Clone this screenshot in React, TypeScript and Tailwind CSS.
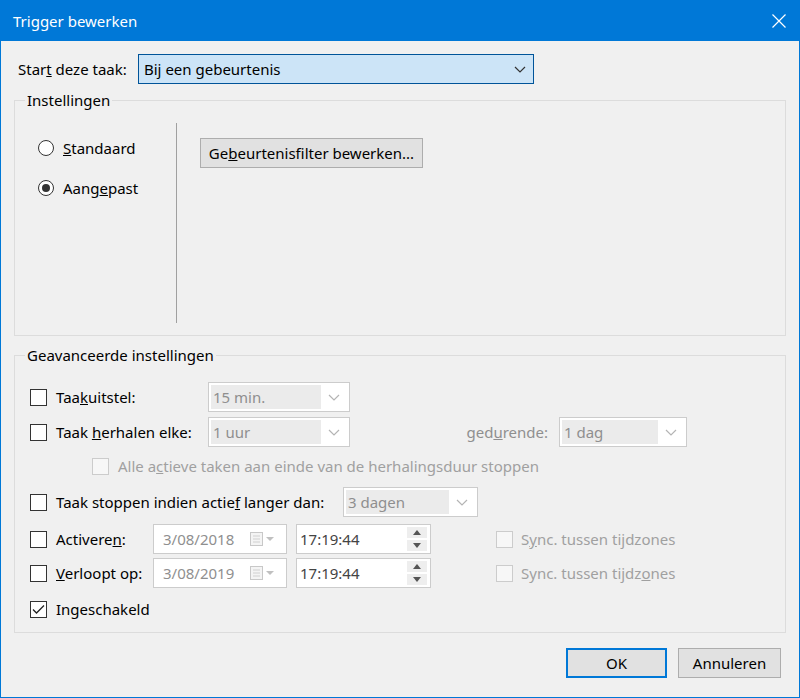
import React from "react";

function Chevron({ className }: { className?: string }) {
  return (
    <svg width="12" height="7" viewBox="0 0 12 7" className={className}>
      <polyline points="1,1 6,6 11,1" fill="none" stroke="currentColor" strokeWidth="1.2" />
    </svg>
  );
}

function Check({ checked, disabled }: { checked?: boolean; disabled?: boolean }) {
  return (
    <span
      className={
        disabled
          ? "w-[17px] h-[17px] shrink-0 border border-[#cccccc] bg-[#f7f7f7]"
          : "w-[17px] h-[17px] shrink-0 border border-[#333333] bg-white flex items-center justify-center"
      }
    >
      {checked && (
        <svg width="13" height="11" viewBox="0 0 13 11">
          <polyline points="1,5.5 4.5,9 12,1.5" fill="none" stroke="#222" strokeWidth="1.3" />
        </svg>
      )}
    </span>
  );
}

function Radio({ checked }: { checked?: boolean }) {
  return (
    <span className="w-[16px] h-[16px] shrink-0 rounded-full border border-[#333333] bg-white flex items-center justify-center">
      {checked && <span className="w-[8px] h-[8px] rounded-full bg-[#333333]" />}
    </span>
  );
}

function Combo({ value, className }: { value: string; className: string }) {
  return (
    <div className={`h-[30px] border border-[#cccccc] bg-white flex items-center p-[2px] ${className}`}>
      <div className="flex-1 h-full bg-[#ebebeb] pl-[2px] text-[#8f8f8f] flex items-center">{value}</div>
      <div className="w-[26px] flex items-center justify-center text-[#b4b4b4]">
        <Chevron />
      </div>
    </div>
  );
}

function DateBox({ value }: { value: string }) {
  return (
    <div className="w-[134px] h-[30px] border border-[#cccccc] bg-white flex items-center pl-[9px] text-[#8f8f8f]">
      <span className="flex-1">{value}</span>
      <svg width="30" height="14" viewBox="0 0 30 14" className="mr-[6px]">
        <rect x="0.5" y="0.5" width="12" height="13" fill="#f4f4f4" stroke="#c8c8c8" />
        <line x1="3" y1="4" x2="10" y2="4" stroke="#d0d0d0" />
        <line x1="3" y1="7" x2="10" y2="7" stroke="#d0d0d0" />
        <line x1="3" y1="10" x2="10" y2="10" stroke="#d0d0d0" />
        <polygon points="16,5 24,5 20,9" fill="#c0c0c0" />
      </svg>
    </div>
  );
}

function TimeBox({ value }: { value: string }) {
  return (
    <div className="w-[135px] h-[30px] border border-[#cccccc] bg-white flex items-center pl-[3px] pr-[3px] text-[#444444]">
      <span className="flex-1">{value}</span>
      <div className="w-[20px] flex flex-col gap-[2px]">
        <div className="h-[11px] bg-[#eeeeee] flex items-center justify-center">
          <svg width="8" height="5" viewBox="0 0 8 5">
            <polygon points="0,5 8,5 4,0" fill="#555" />
          </svg>
        </div>
        <div className="h-[11px] bg-[#eeeeee] flex items-center justify-center">
          <svg width="8" height="5" viewBox="0 0 8 5">
            <polygon points="0,0 8,0 4,5" fill="#555" />
          </svg>
        </div>
      </div>
    </div>
  );
}

export default function App() {
  return (
    <div className="w-[800px] h-[698px] bg-[#0078d7] flex flex-col font-['Noto_Sans',sans-serif] text-[15px] leading-[20px] text-black">
      <div className="h-[41px] shrink-0 flex items-center justify-between pl-[13px] pr-[14px] text-white">
        <span>Trigger bewerken</span>
        <svg width="14" height="14" viewBox="0 0 14 14">
          <path d="M0.5 0.5 L13.5 13.5 M13.5 0.5 L0.5 13.5" stroke="white" strokeWidth="1.2" />
        </svg>
      </div>

      <div className="flex-1 mx-[1px] mb-[1px] bg-[#f0f0f0] flex flex-col">
        <div className="flex items-center pt-[13px]">
          <span className="w-[137px] pl-[17px]">
            Star<u>t</u> deze taak:
          </span>
          <div className="w-[396px] h-[30px] border border-[#005499] bg-[#cce4f7] flex items-center pl-[5px] pr-[7px]">
            <span className="flex-1">Bij een gebeurtenis</span>
            <Chevron className="text-[#333333]" />
          </div>
        </div>

        <fieldset className="mx-[13px] mt-[6px] border border-[#dcdcdc]">
          <legend className="ml-[10px] px-[2px]">Instellingen</legend>
          <div className="flex pt-[13px] pb-[12px]">
            <div className="w-[161px] pl-[23px] pt-[15px] flex flex-col gap-[20px]">
              <div className="h-[20px] flex items-center gap-[9px]">
                <Radio />
                <span>
                  <u>S</u>tandaard
                </span>
              </div>
              <div className="h-[20px] flex items-center gap-[9px]">
                <Radio checked />
                <span>
                  Aang<u>e</u>past
                </span>
              </div>
            </div>
            <div className="w-px h-[200px] bg-[#a0a0a0]" />
            <div className="pl-[23px] pt-[15px]">
              <button className="w-[223px] h-[30px] border border-[#adadad] bg-[#e1e1e1]">
                Ge<u>b</u>eurtenisfilter bewerken...
              </button>
            </div>
          </div>
        </fieldset>

        <fieldset className="mx-[13px] mt-[9px] border border-[#dcdcdc]">
          <legend className="ml-[10px] px-[2px]">Geavanceerde instellingen</legend>
          <div className="flex flex-col pt-[17px] pb-[13px]">
            <div className="h-[30px] flex items-center">
              <div className="w-[193px] pl-[15px] flex items-center gap-[9px]">
                <Check />
                <span>
                  Taa<u>k</u>uitstel:
                </span>
              </div>
              <Combo value="15 min." className="w-[142px]" />
            </div>

            <div className="h-[30px] mt-[5px] flex items-center">
              <div className="w-[193px] pl-[15px] flex items-center gap-[9px]">
                <Check />
                <span>
                  Taak <u>h</u>erhalen elke:
                </span>
              </div>
              <Combo value="1 uur" className="w-[142px]" />
              <span className="w-[209px] text-right pr-[11px] text-[#8f8f8f]">
                ged<u>u</u>rende:
              </span>
              <Combo value="1 dag" className="w-[128px]" />
            </div>

            <div className="h-[20px] mt-[9px] pl-[77px] flex items-center gap-[9px] text-[#a0a0a0]">
              <Check disabled />
              <span>
                Alle a<u>c</u>tieve taken aan einde van de herhalingsduur stoppen
              </span>
            </div>

            <div className="h-[30px] mt-[11px] flex items-center">
              <div className="w-[328px] pl-[15px] flex items-center gap-[9px]">
                <Check />
                <span>
                  Taak stoppen indien actie<u>f</u> langer dan:
                </span>
              </div>
              <Combo value="3 dagen" className="w-[135px]" />
            </div>

            <div className="h-[30px] mt-[7px] flex items-center">
              <div className="w-[138px] pl-[15px] flex items-center gap-[9px]">
                <Check />
                <span>
                  Activere<u>n</u>:
                </span>
              </div>
              <DateBox value="3/08/2018" />
              <div className="ml-[9px]">
                <TimeBox value="17:19:44" />
              </div>
              <div className="ml-[65px] flex items-center gap-[8px] text-[#a0a0a0]">
                <Check disabled />
                <span>
                  S<u>y</u>nc. tussen tijdzones
                </span>
              </div>
            </div>

            <div className="h-[30px] mt-[4px] flex items-center">
              <div className="w-[138px] pl-[15px] flex items-center gap-[9px]">
                <Check />
                <span>
                  <u>V</u>erloopt op:
                </span>
              </div>
              <DateBox value="3/08/2019" />
              <div className="ml-[9px]">
                <TimeBox value="17:19:44" />
              </div>
              <div className="ml-[65px] flex items-center gap-[8px] text-[#a0a0a0]">
                <Check disabled />
                <span>
                  Sync. tussen tijdz<u>o</u>nes
                </span>
              </div>
            </div>

            <div className="h-[20px] mt-[11px] pl-[15px] flex items-center gap-[9px]">
              <Check checked />
              <span>
                In<u>g</u>eschakeld
              </span>
            </div>
          </div>
        </fieldset>

        <div className="flex justify-end gap-[11px] pr-[18px] mt-[15px]">
          <button className="w-[101px] h-[30px] border-2 border-[#0078d7] bg-[#e1e1e1]">OK</button>
          <button className="w-[103px] h-[30px] border border-[#adadad] bg-[#e1e1e1]">Annuleren</button>
        </div>
      </div>
    </div>
  );
}
